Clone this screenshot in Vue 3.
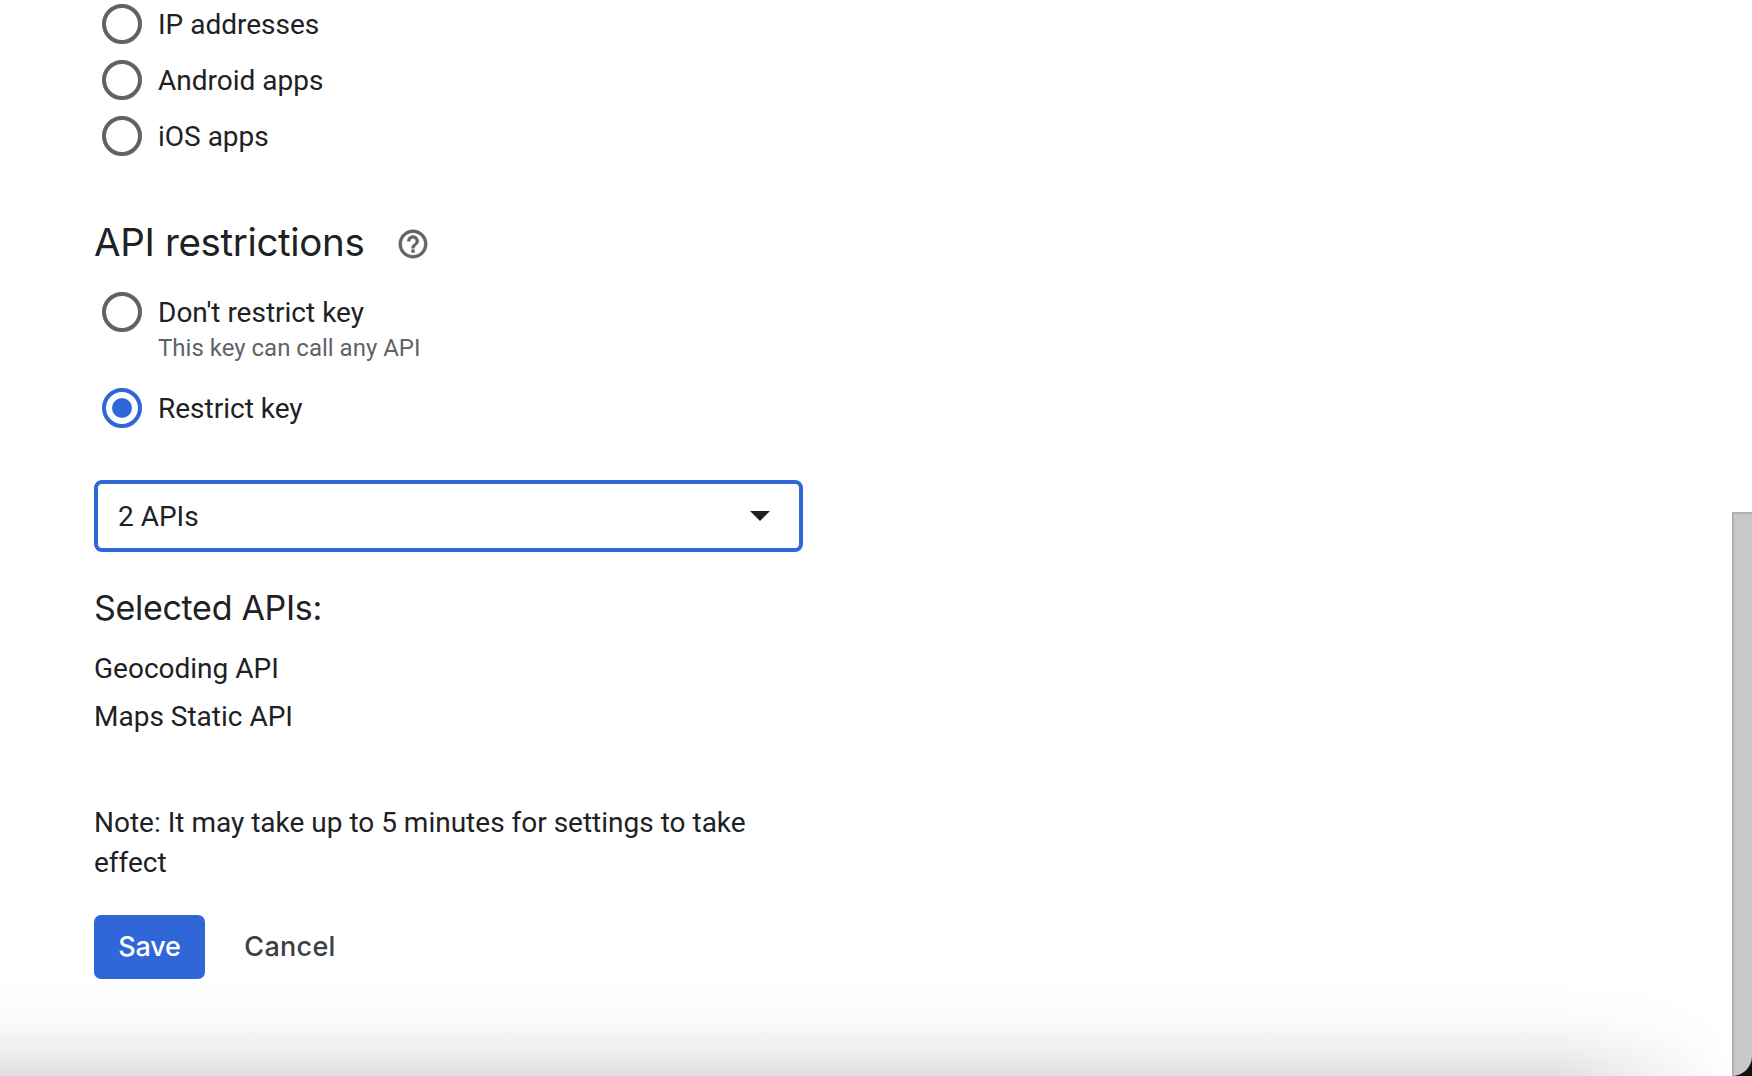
<script setup>
const topOptions = ['IP addresses', 'Android apps', 'iOS apps']
const apis = ['Geocoding API', 'Maps Static API']
</script>

<template>
  <div class="page">
    <main class="form">
      <div class="group-top">
        <label v-for="o in topOptions" :key="o" class="radio-row">
          <span class="radio"></span>
          <span class="label">{{ o }}</span>
        </label>
      </div>

      <div class="heading-row">
        <h2 class="h2">API restrictions</h2>
        <svg class="help" viewBox="0 0 24 24" width="34" height="34" fill="#5f6368" stroke="#5f6368" stroke-width="0.35">
          <path d="M11 18h2v-2h-2v2zm1-16C6.48 2 2 6.48 2 12s4.48 10 10 10 10-4.48 10-10S17.52 2 12 2zm0 18c-4.41 0-8-3.59-8-8s3.59-8 8-8 8 3.59 8 8-3.59 8-8 8zm0-14c-2.21 0-4 1.79-4 4h2c0-1.1.9-2 2-2s2 .9 2 2c0 2-3 1.75-3 5h2c0-2.25 3-2.5 3-5 0-2.21-1.79-4-4-4z" />
        </svg>
      </div>

      <div class="radio-block">
        <span class="radio"></span>
        <div>
          <div class="label block-label">Don't restrict key</div>
          <div class="sub">This key can call any API</div>
        </div>
      </div>
      <div class="radio-row selected-row">
        <span class="radio on"><span class="dot"></span></span>
        <span class="label">Restrict key</span>
      </div>

      <div class="select">
        <span>2 APIs</span>
        <span class="arrow"></span>
      </div>

      <h3 class="h3">Selected APIs:</h3>
      <div class="api-list">
        <div v-for="a in apis" :key="a" class="api">{{ a }}</div>
      </div>

      <p class="note">Note: It may take up to 5 minutes for settings to take effect</p>

      <div class="actions">
        <button class="btn save">Save</button>
        <button class="btn cancel">Cancel</button>
      </div>
    </main>

    <div class="fade"></div>
    <div class="thumb"></div>
    <svg class="corner" viewBox="0 0 20 20" width="20" height="20"><path d="M20 0v20H0C11 20 20 11 20 0z" fill="#111" /></svg>
  </div>
</template>

<style>
html, body { margin: 0; background: #fff; overflow: hidden; }
</style>

<style scoped>
.page {
  position: relative;
  width: 1752px;
  height: 1076px;
  overflow: hidden;
  background: #fff;
  font-family: Roboto, "Liberation Sans", sans-serif;
  color: #202124;
}
.form {
  width: 709px;
  margin-left: 94px;
  display: flex;
  flex-direction: column;
  align-items: stretch;
}
.group-top { display: flex; flex-direction: column; gap: 16px; margin-top: 4px; }
.radio-row { display: flex; align-items: center; height: 40px; padding-left: 8px; }
.radio {
  box-sizing: border-box;
  flex: none;
  width: 40px;
  height: 40px;
  border: 4px solid #5f6368;
  border-radius: 50%;
  display: flex;
  align-items: center;
  justify-content: center;
}
.radio.on { border-color: #2f67d9; }
.dot { width: 20px; height: 20px; border-radius: 50%; background: #2f67d9; }
.label { margin-left: 16px; padding-top: 2px; font-size: 28px; line-height: 40px; }
.block-label { padding-top: 1px; }
.heading-row { display: flex; align-items: center; margin-top: 59px; height: 54px; }
.h2 {
  margin: 0;
  font-family: Inter, Roboto, sans-serif;
  font-weight: 400;
  font-size: 38.5px;
  line-height: 52px;
  letter-spacing: -0.35px;
}
.help { margin-left: 32px; margin-top: 3px; }
.radio-block { display: flex; padding-left: 8px; margin-top: 23px; }
.sub { margin-left: 16px; margin-top: -1px; font-size: 24px; line-height: 32px; color: #5f6368; }
.selected-row { margin-top: 24px; }
.select {
  box-sizing: border-box;
  height: 72px;
  margin-top: 52px;
  border: 4px solid #2f67d9;
  border-radius: 8px;
  padding: 0 29px 0 20px;
  display: flex;
  align-items: center;
  justify-content: space-between;
  font-size: 28px;
}
.arrow {
  width: 0;
  height: 0;
  border-left: 10px solid transparent;
  border-right: 10px solid transparent;
  border-top: 10px solid #202124;
}
.h3 {
  margin: 34px 0 0;
  font-family: Inter, Roboto, sans-serif;
  font-weight: 400;
  font-size: 34px;
  line-height: 44px;
  letter-spacing: -0.3px;
}
.api-list { margin-top: 15px; }
.api { font-size: 28px; line-height: 48px; }
.note { margin: 62px 0 0; font-size: 28px; line-height: 40px; width: 680px; }
.actions { display: flex; align-items: center; gap: 24px; margin-top: 32px; }
.btn {
  border: 0;
  height: 64px;
  border-radius: 7px;
  font-family: Inter, Roboto, sans-serif;
  font-size: 27px;
  font-weight: 500;
  padding: 0 0 2px;
}
.save { width: 111px; background: #2f67d9; color: #fff; letter-spacing: -0.2px; }
.cancel { width: 122px; background: transparent; color: #3c4043; letter-spacing: 0.3px; }
.fade {
  position: absolute;
  left: 0;
  width: 1732px;
  bottom: 0;
  height: 96px;
  background: linear-gradient(to bottom,
    rgba(225,225,225,0) 0%,
    rgba(225,225,225,0.14) 40%,
    rgba(225,225,225,0.52) 70%,
    rgba(225,225,225,1) 100%);
  -webkit-mask-image: linear-gradient(to right, #000 1560px, transparent 1732px);
  mask-image: linear-gradient(to right, #000 1560px, transparent 1732px);
  pointer-events: none;
}
.thumb {
  position: absolute;
  left: 1732px;
  top: 512px;
  right: 0;
  bottom: 0;
  box-sizing: border-box;
  background: #c8c8c8;
  border-left: 2px solid #b0b0b0;
  border-top: 2px solid #b0b0b0;
}
.corner { position: absolute; right: 0; bottom: 0; }
</style>
